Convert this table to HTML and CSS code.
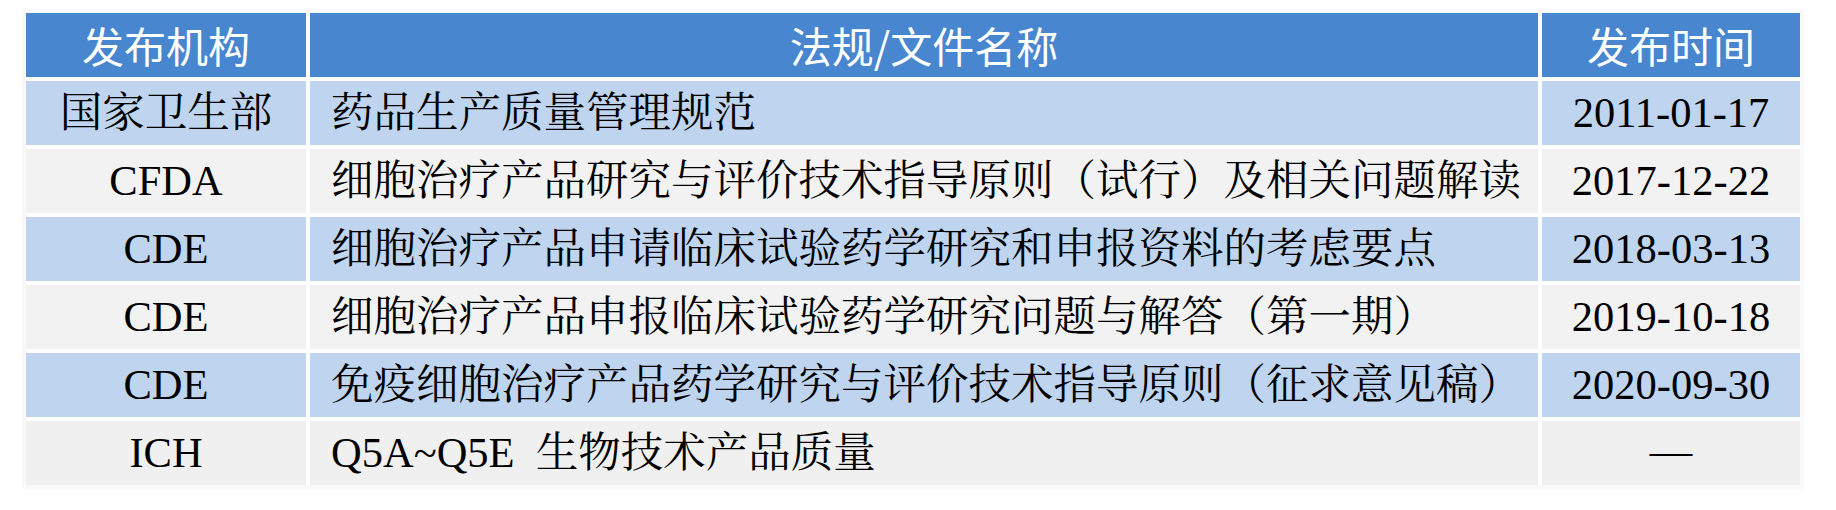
FILE: index.html
```html
<!DOCTYPE html>
<html lang="zh-CN">
<head>
<meta charset="utf-8">
<title>法规/文件</title>
<link rel="stylesheet" href="styles.css">
</head>
<body>
<table class="regs">
  <colgroup>
    <col class="c-org">
    <col class="c-name">
    <col class="c-date">
  </colgroup>
  <thead>
    <tr>
      <th>发布机构</th>
      <th>法规/文件名称</th>
      <th>发布时间</th>
    </tr>
  </thead>
  <tbody>
    <tr class="blue">
      <td class="org">国家卫生部</td>
      <td class="name">药品生产质量管理规范</td>
      <td class="date">2011-01-17</td>
    </tr>
    <tr class="gray">
      <td class="org">CFDA</td>
      <td class="name">细胞治疗产品研究与评价技术指导原则（试行）及相关问题解读</td>
      <td class="date">2017-12-22</td>
    </tr>
    <tr class="blue">
      <td class="org">CDE</td>
      <td class="name">细胞治疗产品申请临床试验药学研究和申报资料的考虑要点</td>
      <td class="date">2018-03-13</td>
    </tr>
    <tr class="gray">
      <td class="org">CDE</td>
      <td class="name">细胞治疗产品申报临床试验药学研究问题与解答（第一期）</td>
      <td class="date">2019-10-18</td>
    </tr>
    <tr class="blue">
      <td class="org">CDE</td>
      <td class="name">免疫细胞治疗产品药学研究与评价技术指导原则（征求意见稿）</td>
      <td class="date">2020-09-30</td>
    </tr>
    <tr class="gray last">
      <td class="org">ICH</td>
      <td class="name">Q5A~Q5E&nbsp; 生物技术产品质量</td>
      <td class="date"><span class="dash">—</span></td>
    </tr>
  </tbody>
</table>
</body>
</html>
```
FILE: styles.css
```css
html, body {
  margin: 0;
  padding: 0;
  background: #ffffff;
}

.regs {
  margin: 9px 0 0 22px;
  border-collapse: separate;
  border-spacing: 4px;
  background: #ffffff;
  box-shadow: inset 0 0 0 4px #f9f9f9;
  table-layout: fixed;
  width: 1782px;
  font-family: "Liberation Serif", "Noto Serif CJK SC", "Noto Sans CJK SC", serif;
  font-size: 42.5px;
  line-height: 46px;
  color: #000000;
}

.c-org { width: 280px; }
.c-name { width: 1228px; }
.c-date { width: 258px; }

.regs th,
.regs td {
  height: 64px;
  padding: 0;
  vertical-align: middle;
  white-space: nowrap;
}

.regs th {
  background: #4886cf;
  color: #ffffff;
  font-family: "Noto Sans CJK SC", "Noto Sans", sans-serif;
  font-size: 42px;
  font-weight: 400;
  text-align: center;
}

.blue td { background: #bed4ef; }
.gray td { background: #f2f2f2; }
.gray.last td { background: #f0f0f0; }

.org { text-align: center; }
.name { text-align: left; padding-left: 21px !important; }
.date { text-align: center; }

.dash { vertical-align: 4px; }
```
